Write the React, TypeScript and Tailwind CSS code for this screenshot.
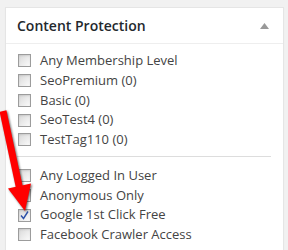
import React from "react";

const groupOne = [
  { label: "Any Membership Level", checked: false },
  { label: "SeoPremium (0)", checked: false },
  { label: "Basic (0)", checked: false },
  { label: "SeoTest4 (0)", checked: false },
  { label: "TestTag110 (0)", checked: false },
];

const groupTwo = [
  { label: "Any Logged In User", checked: false },
  { label: "Anonymous Only", checked: false },
  { label: "Google 1st Click Free", checked: true },
  { label: "Facebook Crawler Access", checked: false },
];

function Box({ checked }: { checked: boolean }) {
  return (
    <span className="w-[13px] h-[13px] border border-[#9c9c9c] bg-[linear-gradient(135deg,#d9d9d9,#fbfbfb)] shadow-[inset_0_1px_2px_rgba(0,0,0,0.1)] flex items-center justify-center shrink-0">
      {checked && (
        <svg width="11" height="11" viewBox="0 0 11 11">
          <path d="M2 5.5 L4.5 8.5 L9 1.5" fill="none" stroke="#2b50a8" strokeWidth="1.4" />
        </svg>
      )}
    </span>
  );
}

function Row({ label, checked }: { label: string; checked: boolean }) {
  return (
    <label className="h-[19.75px] flex items-center gap-[9px]">
      <Box checked={checked} />
      <span className="text-[13px] text-[#444]">{label}</span>
    </label>
  );
}

export default function App() {
  return (
    <div className="relative h-[250px] w-[288px] overflow-hidden bg-[#f1f1f1] pt-[7px] font-['Open_Sans',sans-serif]">
      {/* Meta box */}
      <div className="ml-[5px] w-[279px] h-[260px] border border-[#e5e5e5] bg-white shadow-[0_1px_1px_rgba(0,0,0,0.04)]">
        <div className="h-[36px] border-b border-[#eeeeee] flex items-center justify-between pl-[11px] pr-[14px]">
          <h3 className="text-[14px] font-semibold text-[#23282d]">Content Protection</h3>
          <svg width="9" height="6" viewBox="0 0 9 6">
            <path d="M4.5 0 L9 6 L0 6 Z" fill="#999" />
          </svg>
        </div>

        <div className="pt-[7px] px-[12px]">
          {groupOne.map((r) => (
            <Row key={r.label} {...r} />
          ))}
          <div className="mt-[6px] mb-[9px] border-t border-[#dddddd] -ml-px" />
          {groupTwo.map((r) => (
            <Row key={r.label} {...r} />
          ))}
        </div>
      </div>

      {/* red annotation arrow */}
      <svg
        className="absolute left-0 top-0 drop-shadow-[1px_1px_1px_rgba(0,0,0,0.6)]"
        width="40"
        height="250"
        viewBox="0 0 40 250"
      >
        <line x1="3" y1="111" x2="19.5" y2="188" stroke="#f00" strokeWidth="7" />
        <polygon points="8,188.5 31,183.5 25,211" fill="#f00" />
      </svg>
    </div>
  );
}
